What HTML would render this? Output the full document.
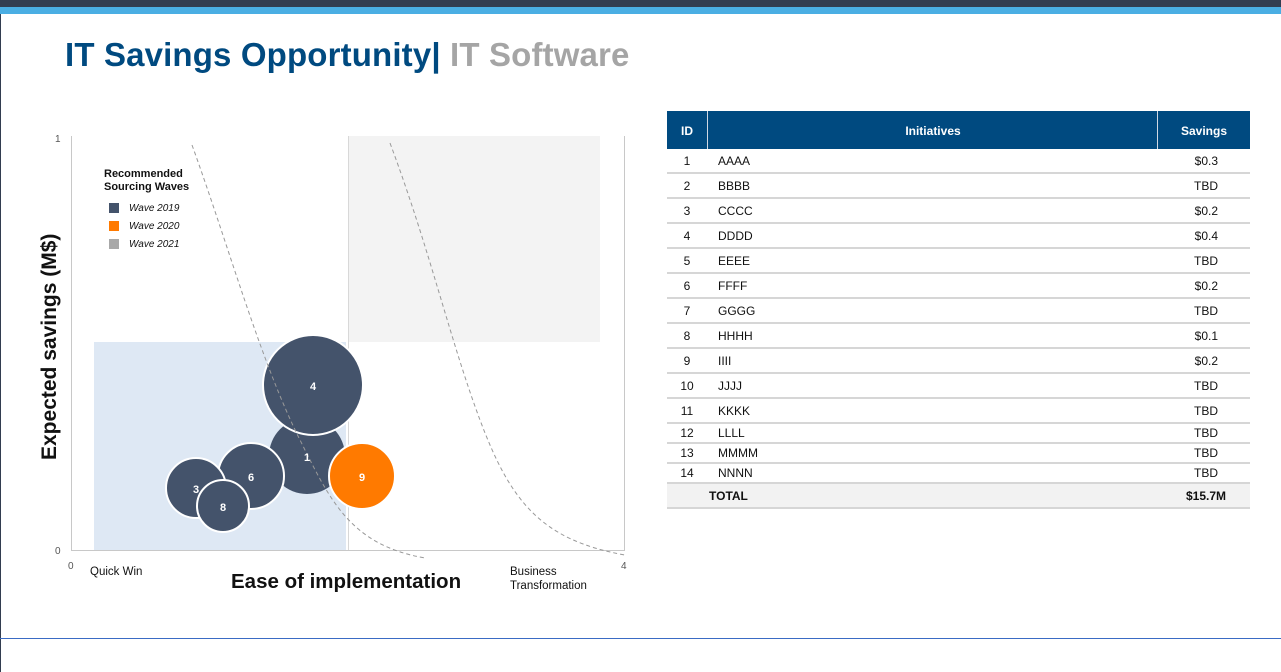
<!DOCTYPE html>
<html><head><meta charset="utf-8"><style>
*{margin:0;padding:0;box-sizing:border-box}
body{width:1281px;height:672px;position:relative;background:#fff;font-family:"Liberation Sans",Arial,sans-serif;overflow:hidden}
.a{position:absolute}
.row{position:absolute;left:667px;width:583px;border-bottom:2px solid #d6d6d6;font-size:12px;color:#111}
.row span{position:absolute;top:50%;transform:translateY(-50%)}
.id{left:0;width:40px;text-align:center}
.nm{left:51px}
.sv{right:32px}
</style></head><body>
<div class="a" style="left:0;top:0;width:1281px;height:7px;background:#323d50"></div>
<div class="a" style="left:0;top:7px;width:1281px;height:7px;background:#4aaee3"></div>
<div class="a" style="left:0;top:14px;width:1px;height:658px;background:#323d50"></div>
<div class="a" style="left:0;top:638px;width:1281px;height:1px;background:#3a6bc4"></div>
<div class="a" style="left:65px;top:36px;font-size:33px;font-weight:bold;color:#004a80;white-space:nowrap;letter-spacing:0.15px">IT Savings Opportunity| <span style="color:#a5a5a5">IT Software</span></div>

<svg class="a" style="left:0;top:0" width="660" height="600">
<rect x="348" y="136" width="252" height="206" fill="#f3f3f3"/>
<rect x="94" y="342" width="252" height="208" fill="#dee8f4"/>
<line x1="71.5" y1="136" x2="71.5" y2="550" stroke="#c8c8c8"/>
<line x1="71" y1="550.5" x2="625" y2="550.5" stroke="#c8c8c8"/>
<line x1="624.5" y1="136" x2="624.5" y2="550" stroke="#c8c8c8"/>
<line x1="348.5" y1="136" x2="348.5" y2="550" stroke="#d8d8d8"/>
<circle cx="307" cy="456" r="38" fill="#44536b"/>
<circle cx="313" cy="385" r="50" fill="#44536b" stroke="#fff" stroke-width="2"/>
<circle cx="362" cy="476" r="33" fill="#ff7a00" stroke="#fff" stroke-width="2"/>
<circle cx="251" cy="476" r="33" fill="#44536b" stroke="#fff" stroke-width="2"/>
<circle cx="196" cy="488" r="30" fill="#44536b" stroke="#fff" stroke-width="2"/>
<circle cx="223" cy="506" r="26" fill="#44536b" stroke="#fff" stroke-width="2"/>
<path d="M192 145 C230 250 260 360 300 440 C330 500 350 545 425 558" fill="none" stroke="#999" stroke-dasharray="4 3"/>
<path d="M390 143 C430 250 450 340 480 420 C510 500 540 540 625 555" fill="none" stroke="#999" stroke-dasharray="4 3"/>
<g font-family="Liberation Sans,Arial,sans-serif" font-size="11" fill="#fff" text-anchor="middle" font-weight="bold">
<text x="313" y="390">4</text><text x="307" y="461">1</text><text x="362" y="481">9</text>
<text x="251" y="481">6</text><text x="196" y="493">3</text><text x="223" y="511">8</text></g>
<g font-family="Liberation Sans,Arial,sans-serif" font-size="10" fill="#555">
<text x="55" y="142">1</text><text x="55" y="554">0</text><text x="68" y="569">0</text><text x="621" y="569">4</text></g>
<g font-family="Liberation Sans,Arial,sans-serif" font-size="11.5" fill="#111">
<text x="90" y="575">Quick Win</text><text x="510" y="575">Business</text><text x="510" y="589">Transformation</text></g>
<text x="231" y="588" font-family="Liberation Sans,Arial,sans-serif" font-size="20.5" font-weight="bold" fill="#111">Ease of implementation</text>
<text transform="translate(56,460) rotate(-90)" font-family="Liberation Sans,Arial,sans-serif" font-size="21" font-weight="bold" fill="#111">Expected savings (M$)</text>
<g font-family="Liberation Sans,Arial,sans-serif" font-size="11" font-weight="bold" fill="#111"><text x="104" y="177">Recommended</text><text x="104" y="190">Sourcing Waves</text></g>
<rect x="109" y="203" width="10" height="10" fill="#44536b"/>
<rect x="109" y="221" width="10" height="10" fill="#ff7a00"/>
<rect x="109" y="239" width="10" height="10" fill="#a8a8a8"/>
<g font-family="Liberation Sans,Arial,sans-serif" font-size="10" font-style="italic" fill="#111">
<text x="129" y="211">Wave 2019</text><text x="129" y="229">Wave 2020</text><text x="129" y="247">Wave 2021</text></g>
</svg>

<div class="a" style="left:667px;top:111px;width:583px;height:38px;background:#004a80;color:#fff;font-size:12px;font-weight:bold">
<div class="a" style="left:0;width:40px;top:13px;text-align:center">ID</div>
<div class="a" style="left:40px;top:0;width:1px;height:38px;background:#cfd8e4"></div>
<div class="a" style="left:41px;width:450px;top:13px;text-align:center">Initiatives</div>
<div class="a" style="left:490px;top:0;width:1px;height:38px;background:#cfd8e4"></div>
<div class="a" style="left:491px;width:92px;top:13px;text-align:center">Savings</div>
</div>

<div class="row" style="top:149px;height:25px"><span class="id">1</span><span class="nm">AAAA</span><span class="sv">$0.3</span></div>
<div class="row" style="top:174px;height:25px"><span class="id">2</span><span class="nm">BBBB</span><span class="sv">TBD</span></div>
<div class="row" style="top:199px;height:25px"><span class="id">3</span><span class="nm">CCCC</span><span class="sv">$0.2</span></div>
<div class="row" style="top:224px;height:25px"><span class="id">4</span><span class="nm">DDDD</span><span class="sv">$0.4</span></div>
<div class="row" style="top:249px;height:25px"><span class="id">5</span><span class="nm">EEEE</span><span class="sv">TBD</span></div>
<div class="row" style="top:274px;height:25px"><span class="id">6</span><span class="nm">FFFF</span><span class="sv">$0.2</span></div>
<div class="row" style="top:299px;height:25px"><span class="id">7</span><span class="nm">GGGG</span><span class="sv">TBD</span></div>
<div class="row" style="top:324px;height:25px"><span class="id">8</span><span class="nm">HHHH</span><span class="sv">$0.1</span></div>
<div class="row" style="top:349px;height:25px"><span class="id">9</span><span class="nm">IIII</span><span class="sv">$0.2</span></div>
<div class="row" style="top:374px;height:25px"><span class="id">10</span><span class="nm">JJJJ</span><span class="sv">TBD</span></div>
<div class="row" style="top:399px;height:25px"><span class="id">11</span><span class="nm">KKKK</span><span class="sv">TBD</span></div>
<div class="row" style="top:424px;height:20px"><span class="id">12</span><span class="nm">LLLL</span><span class="sv">TBD</span></div>
<div class="row" style="top:444px;height:20px"><span class="id">13</span><span class="nm">MMMM</span><span class="sv">TBD</span></div>
<div class="row" style="top:464px;height:20px"><span class="id">14</span><span class="nm">NNNN</span><span class="sv">TBD</span></div>
<div class="row" style="top:484px;height:25px;background:#f2f2f2;font-weight:bold"><span class="nm" style="left:42px">TOTAL</span><span class="sv" style="right:24px">$15.7M</span></div>
</body></html>
